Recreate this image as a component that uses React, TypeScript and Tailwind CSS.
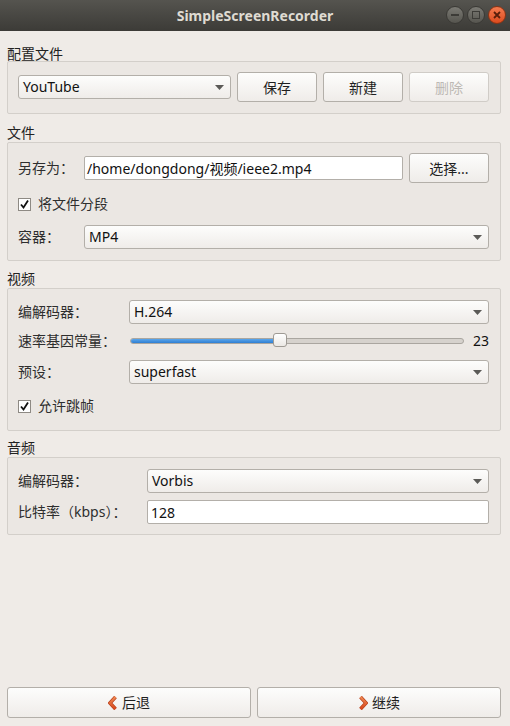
import React from 'react';

const FONT = "font-['Noto_Sans','Noto_Sans_CJK_SC',sans-serif]";

function Combo({ text, className = '' }: { text: string; className?: string }) {
  return (
    <div
      className={`h-[24px] flex items-center justify-between rounded-[3px] border border-[#b3afa9] bg-gradient-to-b from-[#fdfdfc] to-[#efece9] pl-[4px] pr-[6px] text-[14px] text-[#111111] ${className}`}
    >
      <span className="leading-[22px]">{text}</span>
      <svg width="9" height="5" viewBox="0 0 9 5">
        <path d="M0 0 L9 0 L4.5 5 Z" fill="#5b5a57" />
      </svg>
    </div>
  );
}

function Btn({ text, disabled = false, className = '' }: { text: string; disabled?: boolean; className?: string }) {
  return (
    <div
      className={`h-[30px] flex items-center justify-center rounded-[3px] border bg-gradient-to-b from-[#fdfdfc] to-[#efece9] text-[14px] ${
        disabled ? 'border-[#d0ccc7] text-[#bdb9b4]' : 'border-[#b3afa9] text-[#1f1f1f]'
      } ${className}`}
    >
      {text}
    </div>
  );
}

function Field({ text, className = '' }: { text: string; className?: string }) {
  return (
    <div
      className={`h-[24px] flex items-center rounded-[2px] border border-[#b3afa9] bg-white text-[14px] text-[#111111] ${className}`}
    >
      {text}
    </div>
  );
}

function Check({ text }: { text: string }) {
  return (
    <div className="h-[20px] flex items-center">
      <div className="w-[13px] h-[13px] border border-[#8e8a84] bg-white flex items-center justify-center">
        <svg width="11" height="11" viewBox="0 0 11 11">
          <path d="M2 5.5 L4.5 8.5 L9 1.5" fill="none" stroke="#111" strokeWidth="1.8" />
        </svg>
      </div>
      <span className="ml-[7px] text-[14px] text-[#2e2e2e] leading-[20px]">{text}</span>
    </div>
  );
}

function Label({ text, w }: { text: string; w: string }) {
  return <div className={`${w} shrink-0 text-[14px] text-[#2e2e2e] leading-[20px]`}>{text}</div>;
}

function Chevron({ left }: { left: boolean }) {
  return (
    <svg width="10" height="14" viewBox="0 0 10 14">
      <defs>
        <linearGradient id={left ? 'cl' : 'cr'} x1="0" y1="0" x2="0" y2="1">
          <stop offset="0" stopColor="#f08a54" />
          <stop offset="1" stopColor="#d9481c" />
        </linearGradient>
      </defs>
      <path
        d={left ? 'M7.5 1 L2 7 L7.5 13' : 'M2.5 1 L8 7 L2.5 13'}
        fill="none"
        stroke="#b8401a"
        strokeWidth="3.6"
        strokeLinejoin="miter"
      />
      <path
        d={left ? 'M7.5 1 L2 7 L7.5 13' : 'M2.5 1 L8 7 L2.5 13'}
        fill="none"
        stroke={`url(#${left ? 'cl' : 'cr'})`}
        strokeWidth="2.2"
        strokeLinejoin="miter"
      />
    </svg>
  );
}

export default function App() {
  return (
    <div className={`w-[510px] h-[726px] bg-[#efebe7] flex flex-col ${FONT}`}>
      {/* TITLE BAR */}
      <div className="h-[31px] shrink-0 bg-gradient-to-b from-[#55544f] to-[#3c3b37] flex items-center relative">
        <div className="w-full text-center text-[14px] font-bold text-[#dfdbd2] leading-[31px]">
          SimpleScreenRecorder
        </div>
        <div className="absolute right-[4px] top-[6px] flex gap-[3px]">
          <div className="w-[18px] h-[18px] rounded-full border border-[#3a3935] bg-gradient-to-b from-[#7b7a74] to-[#56554f] flex items-center justify-center">
            <div className="w-[8px] h-[2px] bg-[#3c3b37]" />
          </div>
          <div className="w-[18px] h-[18px] rounded-full border border-[#3a3935] bg-gradient-to-b from-[#7b7a74] to-[#56554f] flex items-center justify-center">
            <div className="w-[8px] h-[8px] border-[1.5px] border-[#3c3b37]" />
          </div>
          <div className="w-[18px] h-[18px] rounded-full border border-[#8d3313] bg-gradient-to-b from-[#f47b4f] to-[#dc4a1c] flex items-center justify-center">
            <svg width="8" height="8" viewBox="0 0 8 8">
              <path d="M1 1 L7 7 M7 1 L1 7" stroke="#5a1e0a" strokeWidth="1.8" />
            </svg>
          </div>
        </div>
      </div>

      <div className="ml-[7px] w-[494px] flex flex-col">
        {/* 配置文件 */}
        <div className="mt-[14px] h-[18px] leading-[18px] text-[14px] text-[#222222] mb-[-2px]">配置文件</div>
        <div className="border border-[#d3cfca] bg-[#ebe7e3] rounded-[2px] pl-[10px] pr-[11px] pt-[10px] pb-[11px]">
          <div className="flex items-center h-[30px]">
            <Combo text="YouTube" className="w-[213px]" />
            <Btn text="保存" className="ml-[6px] w-[80px]" />
            <Btn text="新建" className="ml-[6px] w-[80px]" />
            <Btn text="删除" disabled className="ml-[6px] w-[80px]" />
          </div>
        </div>

        {/* 文件 */}
        <div className="mt-[10px] h-[18px] leading-[18px] text-[14px] text-[#222222]">文件</div>
        <div className="border border-[#d3cfca] bg-[#ebe7e3] rounded-[2px] pl-[10px] pr-[11px] pt-[10px] pb-[11px] flex flex-col">
          <div className="flex items-center h-[30px]">
            <Label text="另存为：" w="w-[66px]" />
            <Field text="/home/dongdong/视频/ieee2.mp4" className="w-[319px] pl-[2px]" />
            <Btn text="选择..." className="ml-[6px] w-[80px]" />
          </div>
          <div className="mt-[11px]">
            <Check text="将文件分段" />
          </div>
          <div className="mt-[11px] flex items-center h-[24px]">
            <Label text="容器：" w="w-[66px]" />
            <Combo text="MP4" className="w-[405px]" />
          </div>
        </div>

        {/* 视频 */}
        <div className="mt-[9px] h-[18px] leading-[18px] text-[14px] text-[#222222]">视频</div>
        <div className="border border-[#d3cfca] bg-[#ebe7e3] rounded-[2px] pl-[10px] pr-[11px] pt-[11px] pb-[14px] flex flex-col">
          <div className="flex items-center h-[24px]">
            <Label text="编解码器：" w="w-[111px]" />
            <Combo text="H.264" className="w-[360px]" />
          </div>
          <div className="mt-[8px] flex items-center h-[18px]">
            <Label text="速率基因常量：" w="w-[111px]" />
            <div className="ml-[1px] w-[334px] h-[14px] relative flex items-center">
              <div className="w-full h-[6px] rounded-full border border-[#aaa6a0] bg-[#d6d2cd] flex">
                <div className="w-[150px] h-full rounded-full bg-gradient-to-b from-[#5aa6ec] to-[#2f7fd2] border-r border-[#2567ae]" />
              </div>
              <div className="absolute left-[143px] top-[-1px] w-[14px] h-[14px] rounded-[3px] border border-[#9e9a94] bg-gradient-to-b from-[#ffffff] to-[#ebe8e4]" />
            </div>
            <div className="w-[25px] text-right text-[14px] text-[#111111] leading-[18px]">23</div>
          </div>
          <div className="mt-[10px] flex items-center h-[24px]">
            <Label text="预设：" w="w-[111px]" />
            <Combo text="superfast" className="w-[360px]" />
          </div>
          <div className="mt-[12px]">
            <Check text="允许跳帧" />
          </div>
        </div>

        {/* 音频 */}
        <div className="mt-[8px] h-[18px] leading-[18px] text-[14px] text-[#222222]">音频</div>
        <div className="border border-[#d3cfca] bg-[#ebe7e3] rounded-[2px] pl-[10px] pr-[11px] pt-[11px] pb-[10px] flex flex-col">
          <div className="flex items-center h-[24px]">
            <Label text="编解码器：" w="w-[129px]" />
            <Combo text="Vorbis" className="w-[342px]" />
          </div>
          <div className="mt-[7px] flex items-center h-[24px]">
            <Label text="比特率（kbps）：" w="w-[129px]" />
            <Field text="128" className="w-[342px] pl-[3px]" />
          </div>
        </div>
      </div>

      {/* BOTTOM BUTTONS */}
      <div className="mt-auto mb-[8px] ml-[7px] w-[494px] flex gap-[6px]">
        <div className="flex-1 h-[31px] rounded-[3px] border border-[#b3afa9] bg-gradient-to-b from-[#fdfdfc] to-[#efece9] flex items-center justify-center gap-[4px] text-[14px] text-[#1f1f1f]">
          <Chevron left />
          <span>后退</span>
        </div>
        <div className="flex-1 h-[31px] rounded-[3px] border border-[#b3afa9] bg-gradient-to-b from-[#fdfdfc] to-[#efece9] flex items-center justify-center gap-[4px] text-[14px] text-[#1f1f1f]">
          <Chevron left={false} />
          <span>继续</span>
        </div>
      </div>
    </div>
  );
}
